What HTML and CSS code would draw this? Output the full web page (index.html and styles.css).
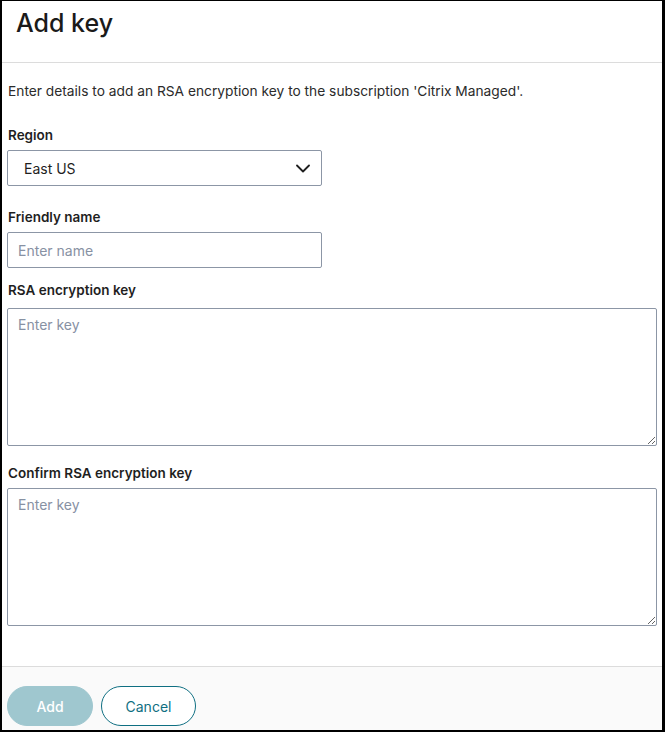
FILE: index.html
```html
<!DOCTYPE html>
<html lang="en">
<head>
<meta charset="utf-8">
<title>Add key</title>
<link rel="stylesheet" href="styles.css">
</head>
<body>
<div class="frame">
  <header class="header">
    <h1 class="title">Add key</h1>
  </header>
  <main class="content">
    <p class="intro">Enter details to add an RSA encryption key to the subscription 'Citrix Managed'.</p>
    <label class="label label-region">Region</label>
    <div class="select">
      <span class="select-value">East US</span>
      <svg class="chevron" width="14" height="9" viewBox="0 0 14 9"><path d="M1 1.5 L7 7.5 L13 1.5" fill="none" stroke="#1f1f1f" stroke-width="1.8" stroke-linecap="round" stroke-linejoin="round"/></svg>
    </div>
    <label class="label label-name">Friendly name</label>
    <input class="input" type="text" placeholder="Enter name">
    <label class="label label-key">RSA encryption key</label>
    <textarea class="textarea" placeholder="Enter key"></textarea>
    <label class="label label-confirm">Confirm RSA encryption key</label>
    <textarea class="textarea" placeholder="Enter key"></textarea>
  </main>
  <footer class="footer">
    <button class="btn btn-primary" type="button">Add</button>
    <button class="btn btn-secondary" type="button">Cancel</button>
  </footer>
</div>
</body>
</html>
```
FILE: styles.css
```css
html, body {
  margin: 0;
  padding: 0;
  background: #ffffff;
}
body {
  font-family: Inter, Roboto, "Liberation Sans", Arial, sans-serif;
  color: #222222;
}
.frame {
  box-sizing: border-box;
  height: 732px;
  width: 665px;
  border-style: solid;
  border-color: #000000;
  border-width: 1px 3px 2px 2px;
  display: flex;
  flex-direction: column;
  background: #ffffff;
}
.header {
  padding: 6px 14px 23px;
  border-bottom: 1px solid #dcdcdc;
}
.title {
  margin: 0;
  font-size: 25px;
  line-height: 32px;
  font-weight: 500;
  color: #1a1a1a;
}
.content {
  flex: 1;
  display: flex;
  flex-direction: column;
  align-items: flex-start;
  padding: 18px 5px 0;
}
.intro {
  margin: 0;
  font-size: 13.75px;
  line-height: 20px;
  color: #2b2b2b;
  padding-left: 1px;
}
.label {
  display: block;
  font-size: 13.5px;
  line-height: 20px;
  font-weight: 600;
  color: #1f1f1f;
  padding-left: 1px;
}
.label-region { margin-top: 24px; margin-bottom: 5px; }
.label-name { margin-top: 21px; margin-bottom: 5px; }
.label-key { margin-top: 12px; margin-bottom: 8px; }
.label-confirm { margin-top: 17px; margin-bottom: 5px; }
.select {
  box-sizing: border-box;
  width: 315px;
  height: 36px;
  border: 1px solid #8c96a6;
  border-radius: 2px;
  display: flex;
  align-items: center;
  justify-content: space-between;
  padding: 0 11px 0 16px;
}
.select-value {
  font-size: 14px;
  color: #1f1f1f;
}
.chevron {
  display: block;
}
.input {
  box-sizing: border-box;
  width: 315px;
  height: 36px;
  border: 1px solid #8c96a6;
  border-radius: 2px;
  padding: 0 10px;
  margin: 0;
  font-family: inherit;
  font-size: 14px;
  color: #1f1f1f;
  outline: none;
}
.textarea {
  box-sizing: border-box;
  width: 650px;
  height: 138px;
  border: 1px solid #8c96a6;
  border-radius: 2px;
  padding: 6px 10px;
  margin: 0;
  font-family: inherit;
  font-size: 14px;
  line-height: 20px;
  color: #1f1f1f;
  resize: vertical;
  outline: none;
  display: block;
}
.input::placeholder,
.textarea::placeholder {
  color: #8791a3;
}
.footer {
  height: 64px;
  box-sizing: border-box;
  border-top: 1px solid #dcdcdc;
  background: #fafafa;
  padding: 19px 5px 0;
  display: flex;
  align-items: flex-start;
  gap: 8px;
}
.btn {
  box-sizing: border-box;
  height: 40px;
  border-radius: 20px;
  font-family: inherit;
  font-size: 14px;
  margin: 0;
  cursor: pointer;
}
.btn-primary {
  width: 86px;
  background: #9fc7cf;
  border: 1px solid #9fc7cf;
  color: #ffffff;
  font-weight: 500;
}
.btn-secondary {
  width: 95px;
  background: #ffffff;
  border: 1px solid #0f6f82;
  color: #0f6f82;
}
```
